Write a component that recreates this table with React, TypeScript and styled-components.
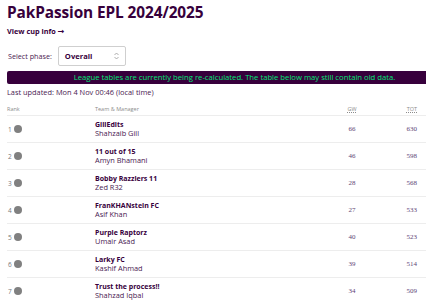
import styled, { createGlobalStyle } from 'styled-components';

const GlobalStyle = createGlobalStyle`
  html, body {
    margin: 0;
    padding: 0;
    overflow: hidden;
    background: #ffffff;
  }
  body {
    font-family: 'Open Sans', 'Noto Sans', sans-serif;
    color: #37003c;
  }
`;

const PAGE = styled.main`
  width: 462px;
  padding: 0 0 0 7px;
  box-sizing: border-box;
`;

const TITLE = styled.h1`
  margin: 0;
  padding-top: 2px;
  font-size: 15.4px;
  line-height: 22px;
  font-weight: 700;
  letter-spacing: -0.1px;
`;

const CUP_LINK = styled.a`
  display: flex;
  align-items: center;
  gap: 2px;
  margin-top: 1px;
  height: 12px;
  font-size: 7.3px;
  font-weight: 700;
  color: #37003c;
  text-decoration: none;
`;

const ARROW = styled.span`
  font-family: 'DejaVu Sans', sans-serif;
  font-size: 8px;
  font-weight: 700;
`;

const PHASE_ROW = styled.div`
  display: flex;
  align-items: center;
  gap: 6px;
  margin-top: 9px;
  height: 20px;
`;

const LABEL = styled.label`
  font-size: 7.2px;
  padding-left: 1px;
  color: #4a1a52;
`;

const SELECT = styled.div`
  display: flex;
  align-items: center;
  justify-content: space-between;
  width: 68px;
  height: 20px;
  box-sizing: border-box;
  padding: 0 6px;
  border: 1px solid #cfcfcf;
  border-radius: 2px;
  font-size: 7.6px;
  font-weight: 700;
`;

const BANNER = styled.div`
  margin-top: 5px;
  height: 13px;
  background: #37003c;
  border-radius: 2px;
  color: #00e676;
  font-size: 7.7px;
  line-height: 13px;
  text-align: center;
`;

const UPDATED = styled.p`
  margin: 1px 0 0;
  font-size: 7.4px;
  line-height: 14px;
  color: #4a1a52;
`;

const TABLE = styled.div`
  margin-top: 3px;
`;

const ROW = styled.div<{ $head?: boolean }>`
  display: grid;
  grid-template-columns: 88px 232px 50px 40px 1fr;
  align-items: center;
  height: ${(p) => (p.$head ? '13px' : '26px')};
  border-bottom: 1px solid #ededed;
`;

const HEAD_CELL = styled.span<{ $align?: string }>`
  font-size: 5.5px;
  color: #8c8c8c;
  text-align: ${(p) => p.$align || 'left'};
`;

const ABBR = styled.abbr`
  text-decoration: underline dotted;
  text-underline-offset: 1px;
`;

const RANK = styled.div`
  display: flex;
  align-items: center;
  gap: 2px;
  font-size: 6.5px;
  color: #777;
  padding-left: 1px;
`;

const DOT = styled.span`
  width: 8px;
  height: 8px;
  border-radius: 50%;
  background: #808080;
`;

const TEAM = styled.div`
  display: flex;
  flex-direction: column;
  line-height: 9px;
`;

const TEAM_NAME = styled.span`
  font-size: 7px;
  font-weight: 700;
`;

const MANAGER = styled.span`
  font-size: 7.4px;
  color: #4a1a52;
`;

const NUM = styled.span<{ $align?: string }>`
  font-family: 'Liberation Serif', serif;
  font-size: 7px;
  color: #5e4676;
  text-align: ${(p) => p.$align || 'left'};
`;

const standings = [
  { rank: 1, team: 'GillEdits', manager: 'Shahzaib Gill', gw: 66, tot: 630 },
  { rank: 2, team: '11 out of 15', manager: 'Amyn Bhamani', gw: 46, tot: 598 },
  { rank: 3, team: 'Bobby Razzlers 11', manager: 'Zed R32', gw: 28, tot: 568 },
  { rank: 4, team: 'FranKHANstein FC', manager: 'Asif Khan', gw: 27, tot: 533 },
  { rank: 5, team: 'Purple Raptorz', manager: 'Umair Asad', gw: 40, tot: 523 },
  { rank: 6, team: 'Larky FC', manager: 'Kashif Ahmad', gw: 39, tot: 514 },
  { rank: 7, team: 'Trust the process!!', manager: 'Shahzad Iqbal', gw: 34, tot: 509 },
];

function App() {
  return (
    <>
      <GlobalStyle />
      <PAGE>
        <TITLE>PakPassion EPL 2024/2025</TITLE>
        <CUP_LINK href="#">
          View cup info <ARROW>→</ARROW>
        </CUP_LINK>

        <PHASE_ROW>
          <LABEL>Select phase:</LABEL>
          <SELECT>
            <span>Overall</span>
            <svg width="5" height="8" viewBox="0 0 5 8">
              <path d="M0.5 3 L2.5 1 L4.5 3" fill="none" stroke="#999" strokeWidth="0.8" />
              <path d="M0.5 5 L2.5 7 L4.5 5" fill="none" stroke="#999" strokeWidth="0.8" />
            </svg>
          </SELECT>
        </PHASE_ROW>

        <BANNER>
          League tables are currently being re-calculated. The table below may
          still contain old data.
        </BANNER>

        <UPDATED>Last updated: Mon 4 Nov 00:46 (local time)</UPDATED>

        <TABLE>
          <ROW $head>
            <HEAD_CELL>Rank</HEAD_CELL>
            <HEAD_CELL>Team &amp; Manager</HEAD_CELL>
            <HEAD_CELL $align="center">
              <ABBR title="Gameweek points">GW</ABBR>
            </HEAD_CELL>
            <HEAD_CELL $align="right">
              <ABBR title="Total points">TOT</ABBR>
            </HEAD_CELL>
            <span />
          </ROW>
          {standings.map((s) => (
            <ROW key={s.rank}>
              <RANK>
                {s.rank}
                <DOT />
              </RANK>
              <TEAM>
                <TEAM_NAME>{s.team}</TEAM_NAME>
                <MANAGER>{s.manager}</MANAGER>
              </TEAM>
              <NUM $align="center">{s.gw}</NUM>
              <NUM $align="right">{s.tot}</NUM>
              <span />
            </ROW>
          ))}
        </TABLE>
      </PAGE>
    </>
  );
}

export default App;
